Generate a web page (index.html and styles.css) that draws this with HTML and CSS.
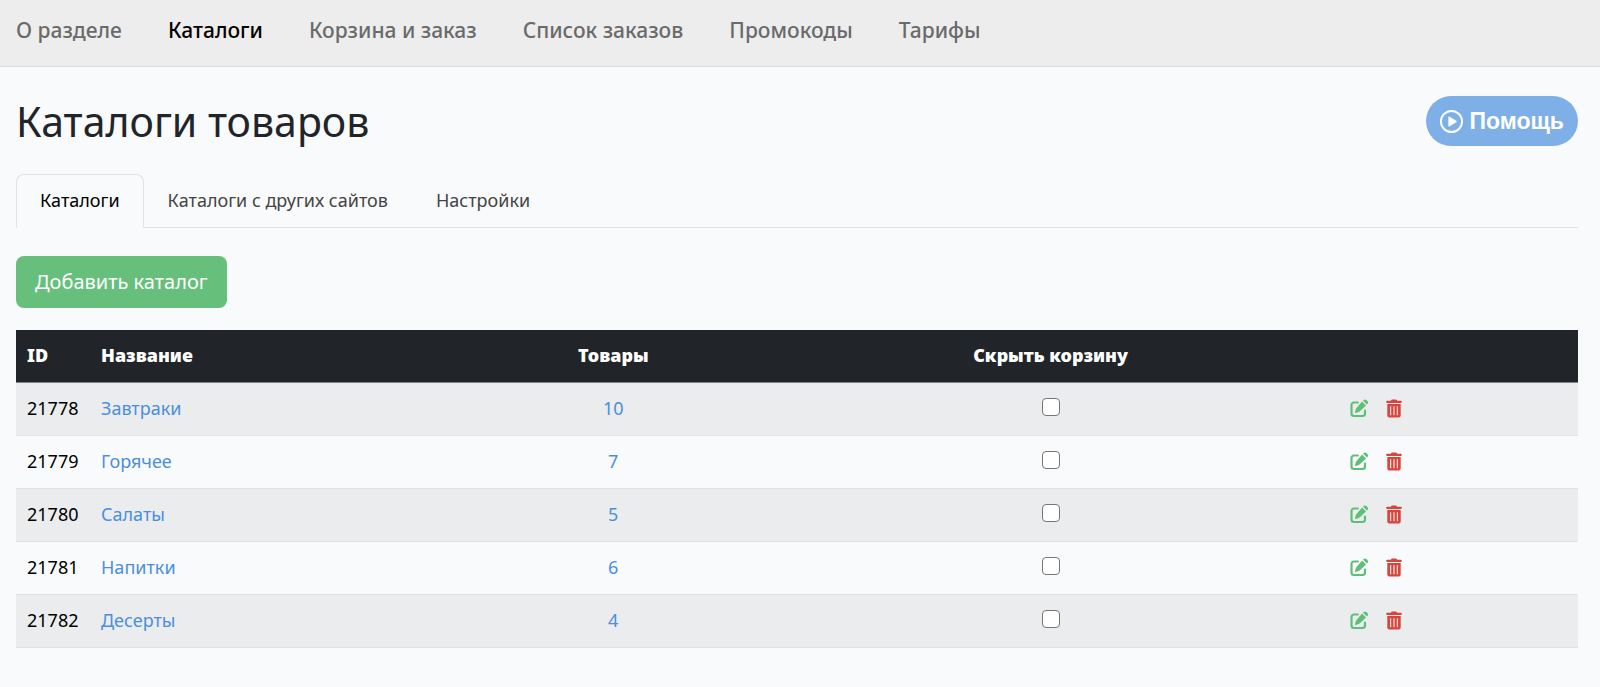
FILE: index.html
```html
<!DOCTYPE html>
<html lang="ru">
<head>
<meta charset="utf-8">
<meta name="viewport" content="width=device-width, initial-scale=1">
<title>Каталоги товаров</title>
<link rel="stylesheet" href="styles.css">
</head>
<body>
<svg class="sprite" aria-hidden="true">
  <symbol id="edit" viewBox="0 0 18 18">
    <path d="M7.800 3H4a2.500 2.500 0 0 0-2.500 2.500V14A2.500 2.500 0 0 0 4 16.500h8.500A2.500 2.500 0 0 0 15 14v-3" fill="none" stroke="currentColor" stroke-width="2.200" stroke-linecap="round"/>
    <path d="M12.100 2l3.900 3.900-6.400 6.200a2 2 0 0 1-.9.500l-3.100.8c-.4.100-.7-.2-.6-.6l.8-3.100a2 2 0 0 1 .5-.9zM13 1.100l.6-.5a2 2 0 0 1 2.800 0l1 1a2 2 0 0 1 0 2.800l-.6.6z" fill="currentColor"/>
  </symbol>
  <symbol id="trash" viewBox="0 0 16 18">
    <path d="M5.200.6A1.100 1.100 0 0 1 6.200 0h3.600a1.100 1.100 0 0 1 1 .6l.3.600h3.700a1.100 1.100 0 0 1 0 2.200H1.200a1.100 1.100 0 0 1 0-2.200h3.700z" fill="currentColor"/>
    <path fill-rule="evenodd" d="M1.300 4.500h13.400V16a2 2 0 0 1-2 2H3.300a2 2 0 0 1-2-2zM4.100 6.800v9h1.100v-9zM7.450 6.800v9h1.100v-9zM10.800 6.800v9h1.100v-9z" fill="currentColor"/>
  </symbol>
</svg>

<nav class="topnav" aria-label="Разделы">
  <a href="#">О разделе</a>
  <a href="#" class="current" aria-current="page">Каталоги</a>
  <a href="#">Корзина и заказ</a>
  <a href="#">Список заказов</a>
  <a href="#">Промокоды</a>
  <a href="#">Тарифы</a>
</nav>

<main class="page">
  <header class="page-head">
    <h1>Каталоги товаров</h1>
    <button type="button" class="help">
      <svg class="help-icon" viewBox="0 0 22 22" aria-hidden="true"><circle cx="11" cy="11" r="10.100" fill="none" stroke="currentColor" stroke-width="1.800"/><path d="M8 6.800v8.400q0 .9.800.5l6.800-4.100q.7-.6 0-1.200L8.800 6.300q-.8-.4-.8.500z" fill="currentColor"/></svg>
      Помощь
    </button>
  </header>

  <nav class="tabs" aria-label="Вкладки">
    <a href="#" class="tab active" aria-current="page">Каталоги</a>
    <a href="#" class="tab">Каталоги с других сайтов</a>
    <a href="#" class="tab">Настройки</a>
  </nav>

  <button type="button" class="add">Добавить каталог</button>

  <table class="catalogs">
    <colgroup><col class="c-id"><col class="c-name"><col class="c-goods"><col class="c-hide"><col></colgroup>
    <thead>
      <tr><th scope="col">ID</th><th scope="col">Название</th><th scope="col" class="mid">Товары</th><th scope="col" class="mid">Скрыть корзину</th><td></td></tr>
    </thead>
    <tbody>
      <tr><td>21778</td><td><a href="#">Завтраки</a></td><td class="mid"><a href="#">10</a></td><td class="mid"><input type="checkbox" aria-label="Скрыть корзину: Завтраки"></td><td><div class="actions"><button type="button" class="edit" aria-label="Изменить"><svg><use href="#edit"/></svg></button><button type="button" class="trash" aria-label="Удалить"><svg><use href="#trash"/></svg></button></div></td></tr>
      <tr><td>21779</td><td><a href="#">Горячее</a></td><td class="mid"><a href="#">7</a></td><td class="mid"><input type="checkbox" aria-label="Скрыть корзину: Горячее"></td><td><div class="actions"><button type="button" class="edit" aria-label="Изменить"><svg><use href="#edit"/></svg></button><button type="button" class="trash" aria-label="Удалить"><svg><use href="#trash"/></svg></button></div></td></tr>
      <tr><td>21780</td><td><a href="#">Салаты</a></td><td class="mid"><a href="#">5</a></td><td class="mid"><input type="checkbox" aria-label="Скрыть корзину: Салаты"></td><td><div class="actions"><button type="button" class="edit" aria-label="Изменить"><svg><use href="#edit"/></svg></button><button type="button" class="trash" aria-label="Удалить"><svg><use href="#trash"/></svg></button></div></td></tr>
      <tr><td>21781</td><td><a href="#">Напитки</a></td><td class="mid"><a href="#">6</a></td><td class="mid"><input type="checkbox" aria-label="Скрыть корзину: Напитки"></td><td><div class="actions"><button type="button" class="edit" aria-label="Изменить"><svg><use href="#edit"/></svg></button><button type="button" class="trash" aria-label="Удалить"><svg><use href="#trash"/></svg></button></div></td></tr>
      <tr><td>21782</td><td><a href="#">Десерты</a></td><td class="mid"><a href="#">4</a></td><td class="mid"><input type="checkbox" aria-label="Скрыть корзину: Десерты"></td><td><div class="actions"><button type="button" class="edit" aria-label="Изменить"><svg><use href="#edit"/></svg></button><button type="button" class="trash" aria-label="Удалить"><svg><use href="#trash"/></svg></button></div></td></tr>
    </tbody>
  </table>
</main>
</body>
</html>
```
FILE: styles.css
```css
* { box-sizing: border-box; }

body {
  margin: 0;
  background: #f9fafc;
  color: #212529;
  font: 18px/28px "Noto Sans", sans-serif;
}

a { color: #4a8fdc; text-decoration: none; }

button { font-family: inherit; border: 0; cursor: pointer; }

.sprite { display: none; }

.topnav {
  display: flex;
  gap: 46px;
  padding: 14px 16px 20px;
  background: #ededed;
  border-bottom: 1px solid #dadada;
  font-size: 21px;
  line-height: 32px;
  font-weight: 500;
}

.topnav a { color: #6a6a6a; }
.topnav .current { color: #000; }

.page { padding: 29px 22px 32px 16px; }

.page-head {
  display: flex;
  justify-content: space-between;
  align-items: center;
}

h1 {
  margin: 0;
  font-size: 41px;
  line-height: 50px;
  font-weight: 400;
}

.help {
  display: flex;
  align-items: center;
  gap: 6px;
  padding: 10px 14px;
  border-radius: 25px;
  background: #7eafe7;
  color: #fff;
  font: 700 23px/30px "Liberation Sans", sans-serif;
}

.help-icon { width: 23px; height: 23px; }

.tabs {
  display: flex;
  margin-top: 28px;
  border-bottom: 1px solid #dee2e6;
}

.tab {
  padding: 11px 23px 13px;
  border: 1px solid transparent;
  border-radius: 8px 8px 0 0;
  margin-bottom: -1px;
  color: #444;
}

.tab.active {
  color: #000;
  background: #f9fafc;
  border-color: #dee2e6 #dee2e6 #f9fafc;
}

.add {
  display: block;
  margin: 28px 0 22px;
  padding: 11px 19px;
  border-radius: 8px;
  background: #66c07b;
  color: #fff;
  font-size: 20px;
  line-height: 30px;
}

.catalogs {
  width: 100%;
  table-layout: fixed;
  border-collapse: separate;
  border-spacing: 0;
  color: #000;
}

.c-id { width: 74px; }
.c-name { width: 19%; }
.c-goods { width: 29%; }
.c-hide { width: 27%; }

.catalogs th,
.catalogs td {
  padding: 11px 11px 13px;
  border-bottom: 1px solid #dfe1e4;
  text-align: left;
  vertical-align: middle;
}

.catalogs thead th,
.catalogs thead td {
  background: #212529;
  color: #fff;
  font-weight: 900;
  border-bottom-color: #80858a;
}

.catalogs tbody tr:nth-child(odd) { background: #ebecee; }

.catalogs .mid { text-align: center; }

.catalogs input {
  display: block;
  appearance: none;
  width: 18px;
  height: 18px;
  margin: 0 auto 3px;
  border: 1px solid #767676;
  border-radius: 4px;
  background: #fff;
}

.catalogs input:checked { background: #4a8fdc; }

.actions { display: flex; align-items: center; gap: 18px; padding-left: 78px; }
.actions button { display: flex; padding: 0; background: none; }
.actions svg { width: 18px; height: 19px; }
.actions .trash svg { width: 16px; }
.edit { color: #5fbf77; }
.trash { color: #d9453b; }
```
